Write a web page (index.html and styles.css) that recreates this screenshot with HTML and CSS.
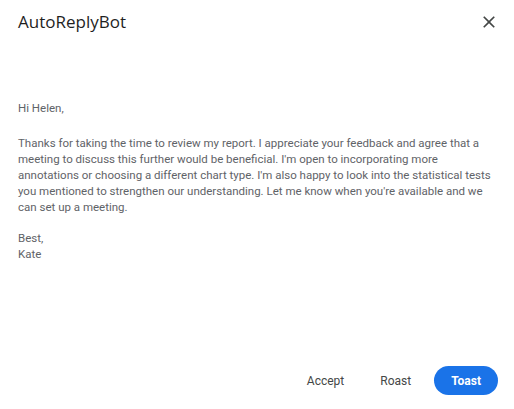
FILE: index.html
```html
<!DOCTYPE html>
<html>
<head>
<meta charset="utf-8">
<link rel="stylesheet" href="styles.css">
</head>
<body>
<div class="dialog">
  <header class="header">
    <h1 class="title">AutoReplyBot</h1>
    <button class="close" aria-label="Close">
      <svg viewBox="0 0 24 24" width="20" height="20"><path d="M19 6.41 17.59 5 12 10.59 6.41 5 5 6.41 10.59 12 5 17.59 6.41 19 12 13.41 17.59 19 19 17.59 13.41 12z" fill="#444746"/></svg>
    </button>
  </header>
  <main class="content">
    <p class="greet">Hi Helen,</p>
    <p class="para">Thanks for taking the time to review my report. I appreciate your feedback and agree that a meeting to discuss this further would be beneficial. I'm open to incorporating more annotations or choosing a different chart type. I'm also happy to look into the statistical tests you mentioned to strengthen our understanding. Let me know when you're available and we can set up a meeting.</p>
    <p class="sign">Best,<br>Kate</p>
  </main>
  <footer class="actions">
    <button class="btn text">Accept</button>
    <button class="btn text">Roast</button>
    <button class="btn filled">Toast</button>
  </footer>
</div>
</body>
</html>
```
FILE: styles.css
```css
html, body {
  margin: 0;
  padding: 0;
  background: #ffffff;
}
.dialog {
  height: 409px;
  display: flex;
  flex-direction: column;
  box-sizing: border-box;
}
.header {
  display: flex;
  align-items: center;
  justify-content: space-between;
  padding: 10px 15px 2px 18px;
}
.title {
  margin: 0;
  font-family: "Open Sans", sans-serif;
  font-size: 17px;
  font-weight: 400;
  color: #1f1f1f;
  line-height: 24px;
}
.close {
  border: none;
  background: none;
  padding: 0;
  width: 20px;
  height: 20px;
  display: flex;
  align-items: center;
  justify-content: center;
}
.content {
  flex: 1;
  padding: 64px 18px 0 18px;
  font-family: Roboto, sans-serif;
  font-size: 11.5px;
  line-height: 16px;
  color: #5f6368;
}
.content p {
  margin: 0;
}
.greet {
  margin-bottom: 19px !important;
}
.para {
  margin-bottom: 15px !important;
}
.actions {
  display: flex;
  justify-content: flex-end;
  gap: 4px;
  padding: 0 16px 14px 0;
}
.btn {
  font-family: Roboto, sans-serif;
  font-size: 12px;
  font-weight: 400;
  height: 29px;
  padding: 0 16px;
  border: none;
  border-radius: 15px;
  background: none;
  color: #444746;
}
.btn.filled {
  margin-left: 3px;
  padding: 0 17px;
  background: #1a73e8;
  color: #ffffff;
  font-weight: 700;
}
```
